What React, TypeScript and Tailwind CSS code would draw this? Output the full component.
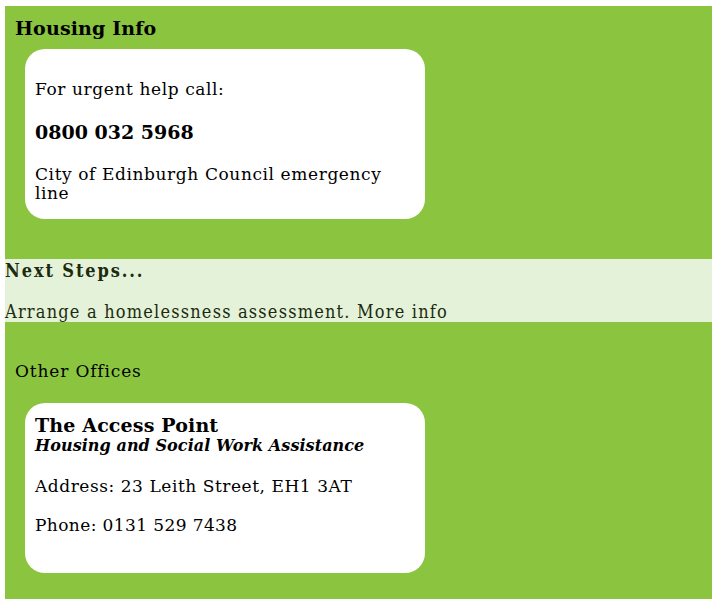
export default function App() {
  return (
    <div className="px-[5px] pt-[6px] pb-[7px] font-['DejaVu_Serif',serif] text-black">
      <section className="bg-[#8bc540] px-[10px] pt-[11px] pb-[40px]">
        <h2 className="text-[19px] font-bold leading-[23px] tracking-[0.15px]">Housing Info</h2>
        <div className="ml-[10px] mt-[9px] h-[170px] w-[400px] rounded-[20px] bg-white px-[10px] pt-[31px]">
          <p className="text-[17px] leading-[19px] tracking-[0.6px]">For urgent help call:</p>
          <p className="mt-[22px] text-[19px] font-bold leading-[23px]">0800 032 5968</p>
          <p className="mt-[21px] text-[17px] leading-[19px] tracking-[0.6px]">City of Edinburgh Council emergency line</p>
        </div>
      </section>

      <section className="bg-[#e4f2d9] font-['DejaVu_Serif_Condensed','DejaVu_Serif',serif] text-[#1c2b0e]">
        <h3 className="text-[18px] font-bold leading-[24px] tracking-[1.9px]">Next Steps...</h3>
        <p className="mt-[19px] text-[18px] leading-[20px] tracking-[1.2px]">Arrange a homelessness assessment. More info</p>
      </section>

      <section className="bg-[#8bc540] px-[10px] pt-[39px] pb-[26px]">
        <h3 className="text-[17px] leading-[20px] tracking-[0.85px]">Other Offices</h3>
        <div className="ml-[10px] mt-[22px] h-[170px] w-[400px] rounded-[20px] bg-white px-[10px] pt-[11px]">
          <h4 className="text-[19px] font-bold leading-[22px] tracking-[0.15px]">The Access Point</h4>
          <p className="text-[16px] font-bold italic leading-[20px] tracking-[0.07px]">Housing and Social Work Assistance</p>
          <p className="mt-[20px] text-[17px] leading-[20px] tracking-[0.55px]">Address: 23 Leith Street, EH1 3AT</p>
          <p className="mt-[19px] text-[17px] leading-[20px] tracking-[0.4px]">Phone: 0131 529 7438</p>
        </div>
      </section>
    </div>
  );
}
